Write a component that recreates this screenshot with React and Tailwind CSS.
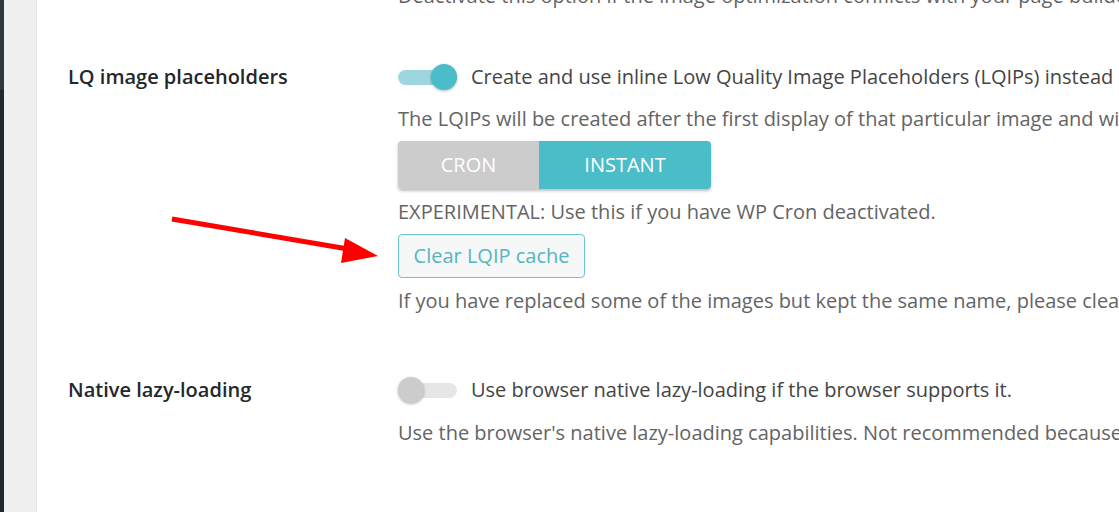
export default function App() {
  return (
    <div className="relative h-[512px] w-[1119px] overflow-hidden bg-white font-['Open_Sans',sans-serif]">
      <div className="flex h-full">
        {/* admin sidebar edge */}
        <div className="flex w-[4px] flex-col">
          <div className="h-[90px] bg-[#32373c]" />
          <div className="flex-1 bg-[#23282d]" />
        </div>
        <div className="w-[33px] border-r border-[#e2e2e2] bg-[#f0f0f0]" />

        <div className="flex-1 overflow-hidden pl-[31px]">
          {/* previous row tail */}
          <div className="-mt-[18px] flex">
            <div className="w-[330px] shrink-0" />
            <p className="whitespace-nowrap text-[20px] leading-[28px] text-[#646464]">
              Deactivate this option if the image optimization conflicts with your page builder.
            </p>
          </div>

          {/* LQ image placeholders */}
          <div className="mt-[53px] flex">
            <div className="w-[330px] shrink-0 text-[20px] font-semibold leading-[28px] text-[#23282d]">
              LQ image placeholders
            </div>
            <div className="flex flex-col">
              <div className="flex items-center">
                <Toggle on />
                <span className="ml-[14px] whitespace-nowrap text-[20px] leading-[28px] text-[#444]">
                  Create and use inline Low Quality Image Placeholders (LQIPs) instead of the original images.
                </span>
              </div>
              <p className="mt-[14px] whitespace-nowrap text-[20px] leading-[28px] text-[#646464]">
                The LQIPs will be created after the first display of that particular image and will be used instead.
              </p>
              <div className="mt-[8px] flex h-[48px] w-[313px] overflow-hidden rounded-[4px] shadow-[0_2px_3px_rgba(0,0,0,0.25)]">
                <button className="w-[141px] bg-[#cccccc] text-[20px] text-white">CRON</button>
                <button className="flex-1 bg-[#4bbdc8] text-[20px] text-white">INSTANT</button>
              </div>
              <p className="mt-[9px] whitespace-nowrap text-[20px] leading-[28px] text-[#646464]">
                EXPERIMENTAL: Use this if you have WP Cron deactivated.
              </p>
              <div className="mt-[8px]">
                <button className="h-[44px] w-[187px] rounded-[4px] border border-[#6cc4cc] bg-[#f6f7f7] text-[20px] text-[#55b6c0]">
                  Clear LQIP cache
                </button>
              </div>
              <p className="mt-[9px] whitespace-nowrap text-[20px] leading-[28px] text-[#646464]">
                If you have replaced some of the images but kept the same name, please clear the LQIP cache.
              </p>
            </div>
          </div>

          {/* Native lazy-loading */}
          <div className="mt-[61px] flex">
            <div className="w-[330px] shrink-0 text-[20px] font-semibold leading-[28px] text-[#23282d]">
              Native lazy-loading
            </div>
            <div className="flex flex-col">
              <div className="flex items-center">
                <Toggle />
                <span className="ml-[14px] whitespace-nowrap text-[20px] leading-[28px] text-[#444]">
                  Use browser native lazy-loading if the browser supports it.
                </span>
              </div>
              <p className="mt-[15px] whitespace-nowrap text-[20px] leading-[28px] text-[#646464]">
                Use the browser's native lazy-loading capabilities. Not recommended because it loads too many images.
              </p>
            </div>
          </div>
        </div>
      </div>

      {/* annotation arrow */}
      <svg className="absolute left-0 top-0" width="1119" height="512">
        <line x1="172" y1="219" x2="348" y2="249" stroke="#ff0000" strokeWidth="5" />
        <polygon points="378,256 345,238 341,263" fill="#ff0000" />
      </svg>
    </div>
  );
}

function Toggle({ on = false }) {
  return (
    <div className="relative h-[28px] w-[59px] shrink-0">
      <div
        className={`absolute left-0 right-0 top-[7px] h-[15px] rounded-full ${
          on ? "bg-[#9dd6de]" : "bg-[#e6e6e6]"
        }`}
      />
      <div
        className={`absolute top-[1px] h-[26px] w-[26px] rounded-full shadow-[0_1px_3px_rgba(0,0,0,0.3)] ${
          on ? "right-0 bg-[#4bbdc8]" : "left-0 bg-[#cccccc]"
        }`}
      />
    </div>
  );
}
